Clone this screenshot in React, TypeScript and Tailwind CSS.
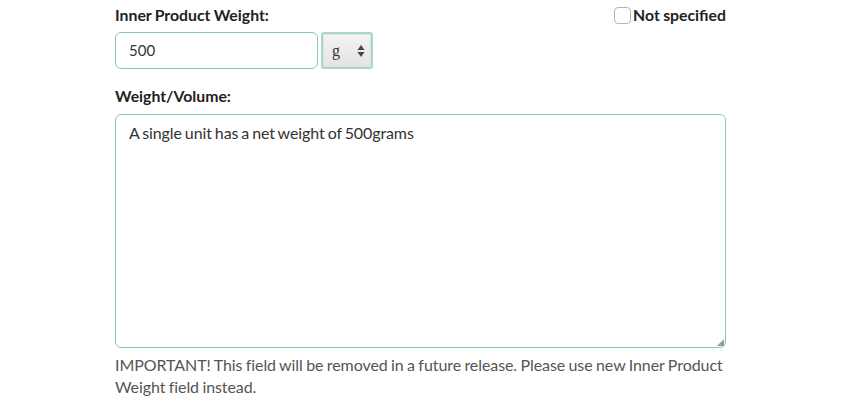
import React from "react";

export default function App() {
  return (
    <div
      className="w-[850px] h-[408px] bg-white overflow-hidden"
      style={{ fontFamily: "Lato, 'Noto Sans', sans-serif" }}
    >
      <div className="ml-[115px] w-[611px] pt-[5px]">
        <div className="flex items-center justify-between h-[20px]">
          <label className="text-[15.8px] font-bold text-[#222] leading-[20px] [word-spacing:-0.5px]">
            Inner Product Weight:
          </label>
          <label className="flex items-center text-[15.8px] font-bold text-[#222] leading-[20px] [word-spacing:-0.5px]">
            <span className="w-[17px] h-[17px] mr-[2px] rounded-[4px] border border-[#b5b5b5] bg-white inline-block" />
            Not specified
          </label>
        </div>
        <div className="flex mt-[7px] gap-[3px]">
          <div className="w-[203px] h-[37px] rounded-[6px] border border-[#86cbb4] flex items-center pl-[13px] text-[15px] text-[#333]">
            500
          </div>
          <div className="w-[52px] h-[37px] rounded-[3px] border-2 border-[#a6d8c8] bg-gradient-to-b from-[#f4f4f4] to-[#e3e3e3] flex items-center justify-between pl-[9px] pr-[6px] shadow-[inset_0_0_0_1px_#e0e0e0]">
            <span
              className="text-[16px] text-[#333] leading-none"
              style={{ fontFamily: "'Liberation Serif', serif" }}
            >
              g
            </span>
            <svg width="8" height="14" viewBox="0 0 8 14">
              <path d="M4 1 L7.5 6 L0.5 6 Z" fill="#444" />
              <path d="M4 13 L7.5 8 L0.5 8 Z" fill="#444" />
            </svg>
          </div>
        </div>
        <div className="mt-[17px] text-[15.8px] font-bold text-[#222] leading-[20px]">
          Weight/Volume:
        </div>
        <div className="relative mt-[8px] h-[234px] rounded-[6px] border border-[#86cbb4] pl-[13px] pt-[8px] text-[16px] text-[#333] leading-[20px] tracking-[-0.1px] [word-spacing:-1px]">
          A single unit has a net weight of 500grams
          <svg
            className="absolute right-[1px] bottom-[1px]"
            width="7"
            height="7"
            viewBox="0 0 7 7"
          >
            <path d="M7 0 L7 7 L0 7 Z" fill="#9a9a9a" />
          </svg>
        </div>
        <p className="mt-[6px] text-[16px] text-[#555] leading-[22px] tracking-[-0.08px] [word-spacing:-0.6px]">
          IMPORTANT! This field will be removed in a future release. Please use new Inner Product Weight field instead.
        </p>
      </div>
    </div>
  );
}
